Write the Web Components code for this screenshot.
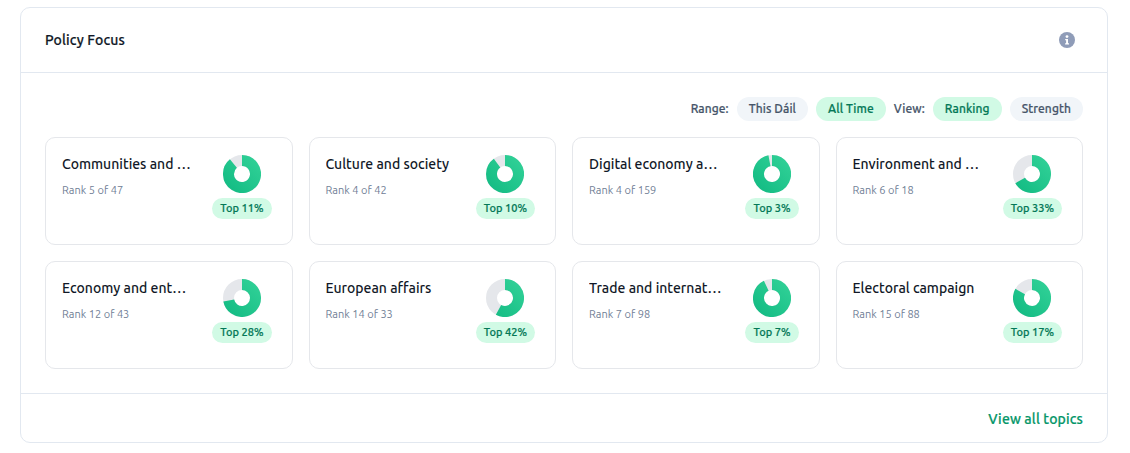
<!DOCTYPE html>
<html><head><meta charset="utf-8"><style>
html,body{margin:0;background:#fff}
body{padding:7px 22px 10px 20px;font-family:Ubuntu,"Noto Sans",sans-serif}
</style></head><body>
<policy-panel></policy-panel>
<script>
class FilterPill extends HTMLElement{
  constructor(){super();const a=this.hasAttribute('active');this.attachShadow({mode:'open'}).innerHTML=`<style>
  :host{display:inline-flex;align-items:center;box-sizing:border-box;height:24px;padding:0 12px 2px;border-radius:12px;font-size:12px;font-weight:500;letter-spacing:.008em;-webkit-text-stroke:.2px currentColor;
  background:${a?'#d1fae5':'#f1f5f9'};color:${a?'#047857':'#475569'}}</style><slot></slot>`}
}
customElements.define('filter-pill',FilterPill);
class TopicDonut extends HTMLElement{
  constructor(){super();const p=+this.getAttribute('pct');const id='g'+p;
  this.attachShadow({mode:'open'}).innerHTML=`<style>:host{display:block;width:38px;height:38px}svg{display:block}</style>
  <svg width="38" height="38" viewBox="0 0 38 38"><defs><linearGradient id="${id}" gradientUnits="userSpaceOnUse" x1="38" y1="0" x2="0" y2="38"><stop offset="0" stop-color="#34d399"/><stop offset="1" stop-color="#10b981"/></linearGradient></defs>
  <circle cx="19" cy="19" r="13.5" fill="none" stroke="#e5e7eb" stroke-width="11"/>
  <path d="${this.arc(100-p)}" fill="none" stroke="url(#${id})" stroke-width="11"/></svg>`}
  arc(g){const a=g/100*2*Math.PI,r=13.5,x=19+r*Math.sin(a),y=19-r*Math.cos(a);return `M19 5.5A${r} ${r} 0 ${g>50?1:0} 1 ${x.toFixed(3)} ${y.toFixed(3)}`}
}
customElements.define('topic-donut',TopicDonut);
class TopicCard extends HTMLElement{
  constructor(){super();const g=n=>this.getAttribute(n);
  this.attachShadow({mode:'open'}).innerHTML=`<style>
  :host{display:flex;justify-content:space-between;gap:21px;box-sizing:border-box;height:108px;min-width:0;padding:16px;border:1px solid #e5e7eb;border-radius:10px;background:#fff}
  .t{min-width:0;flex:1}
  .n{font-size:14px;font-weight:500;line-height:20px;color:#111827;white-space:nowrap;overflow:hidden;text-overflow:ellipsis}
  .r{margin-top:8px;font-size:11px;line-height:16px;color:#718096}
  .m{display:flex;flex-direction:column;align-items:center;gap:5px;flex:none;margin:1px 4px 0 0}
  .b{display:flex;align-items:center;box-sizing:border-box;height:21px;padding:0 8px 2px;border-radius:11px;background:#d1fae5;color:#047857;font-size:11px;font-weight:500;-webkit-text-stroke:.2px currentColor}
  </style><div class="t"><div class="n">${g('name')}</div><div class="r">${g('rank')}</div></div>
  <div class="m"><topic-donut pct="${g('pct')}"></topic-donut><div class="b">Top ${g('pct')}%</div></div>`}
}
customElements.define('topic-card',TopicCard);
const topics=[['Communities and housing','Rank 5 of 47',11],['Culture and society','Rank 4 of 42',10],['Digital economy and technology','Rank 4 of 159',3],['Environment and climate','Rank 6 of 18',33],['Economy and enterprise','Rank 12 of 43',28],['European affairs','Rank 14 of 33',42],['Trade and international relations','Rank 7 of 98',7],['Electoral campaign','Rank 15 of 88',17]];
class PolicyPanel extends HTMLElement{
  constructor(){super();this.attachShadow({mode:'open'}).innerHTML=`<style>
  :host{display:block;box-sizing:border-box;height:436px;border:1px solid #e2e8f0;border-radius:10px;background:#fff}
  header{display:flex;align-items:center;justify-content:space-between;box-sizing:border-box;height:65px;padding:0 32px 0 24px;border-bottom:1px solid #e2e8f0}
  h2{margin:0;font-size:14px;font-weight:500;letter-spacing:.01em;-webkit-text-stroke:.2px currentColor;color:#111827}
  .body{padding:24px}
  .ctl{display:flex;justify-content:flex-end;align-items:center;gap:8px;height:24px;margin-bottom:16px}
  .l{font-size:12px;font-weight:500;letter-spacing:.008em;-webkit-text-stroke:.2px currentColor;padding-bottom:2px;color:#475569}
  .grid{display:grid;grid-template-columns:repeat(4,minmax(0,1fr));gap:16px}
  footer{display:flex;justify-content:flex-end;align-items:center;box-sizing:border-box;height:50px;padding:0 24px;border-top:1px solid #e2e8f0;color:#059669;font-size:14px;font-weight:500;letter-spacing:.01em;-webkit-text-stroke:.2px currentColor}
  svg{display:block}
  </style>
  <header><h2>Policy Focus</h2><svg width="16" height="16" viewBox="0 0 16 16"><circle cx="8" cy="8" r="8" fill="#8f9cb8"/><circle cx="8" cy="4.6" r="1.4" fill="#fff"/><path d="M6.2 6.9h2.8v4.3h1v1.4H6.1v-1.4h1V8.3h-.9z" fill="#fff"/></svg></header>
  <div class="body"><div class="ctl"><span class="l">Range:</span><filter-pill>This Dáil</filter-pill><filter-pill active>All Time</filter-pill><span class="l">View:</span><filter-pill active>Ranking</filter-pill><filter-pill>Strength</filter-pill></div>
  <div class="grid">${topics.map(t=>`<topic-card name="${t[0]}" rank="${t[1]}" pct="${t[2]}"></topic-card>`).join('')}</div></div>
  <footer>View all topics</footer>`}
}
customElements.define('policy-panel',PolicyPanel);
</script></body></html>
